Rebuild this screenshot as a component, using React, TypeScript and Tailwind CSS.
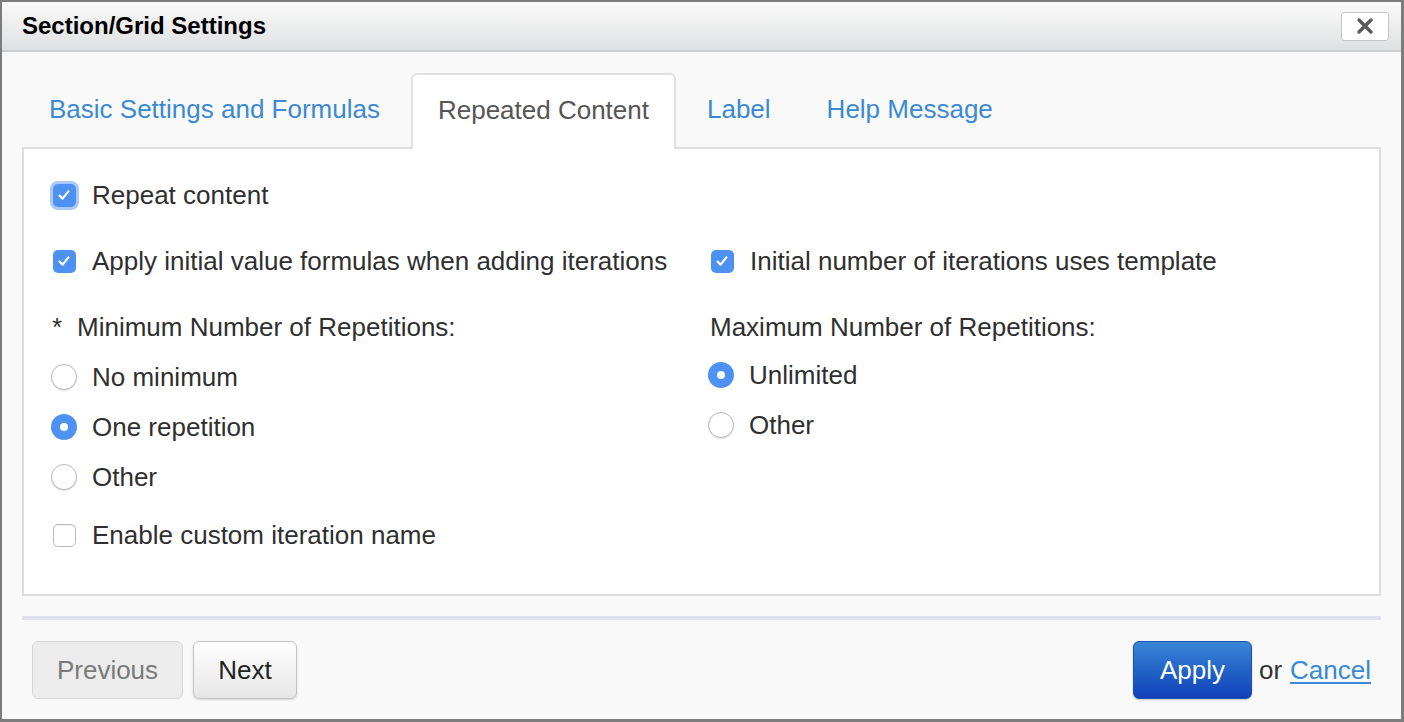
import type { ReactNode } from "react";

const FONT = "font-['Liberation_Sans',Arial,Helvetica,sans-serif]";

function Check({ checked, focus }: { checked: boolean; focus?: boolean }) {
  return (
    <span className="flex h-[26px] w-[26px] shrink-0 items-center justify-center">
      {checked ? (
        <span
          className={
            "flex h-[23px] w-[23px] items-center justify-center rounded-[5px] bg-[#4d92f2] " +
            (focus ? "shadow-[0_0_0_3px_#a9c9f9]" : "")
          }
        >
          <svg width="16" height="16" viewBox="0 0 16 16" fill="none">
            <path d="M3.6 8.6 6.6 11.6 12.4 4.4" stroke="white" strokeWidth="2.2" strokeLinecap="round" strokeLinejoin="round" />
          </svg>
        </span>
      ) : (
        <span className="h-[23px] w-[23px] rounded-[5px] border border-[#b9b9b9] bg-white shadow-[inset_0_1px_1px_rgba(0,0,0,0.04)]" />
      )}
    </span>
  );
}

function Radio({ checked }: { checked: boolean }) {
  return checked ? (
    <span className="flex h-[26px] w-[26px] shrink-0 items-center justify-center rounded-full bg-[#4d92f2]">
      <span className="h-[8px] w-[8px] rounded-full bg-white" />
    </span>
  ) : (
    <span className="h-[26px] w-[26px] shrink-0 rounded-full border border-[#b9b9b9] bg-white shadow-[0_1px_1px_rgba(0,0,0,0.12)]" />
  );
}

function Row({ control, children }: { control?: ReactNode; children: ReactNode }) {
  return (
    <div className="flex h-[40px] items-center gap-[15px] whitespace-nowrap">
      {control}
      <span>{children}</span>
    </div>
  );
}

const tabs = [
  { name: "Basic Settings and Formulas", active: false },
  { name: "Repeated Content", active: true },
  { name: "Label", active: false },
  { name: "Help Message", active: false },
];

export default function App() {
  return (
    <div
      className={`${FONT} flex h-[722px] w-[1404px] flex-col border-t-2 border-b-[3px] border-l-2 border-r-[3px] border-[#7c7c7c] bg-[#f9f9f9] text-[26px] text-[#2f2f2f]`}
    >
      {/* title bar */}
      <div className="flex h-[50px] shrink-0 items-center justify-between border-b-2 border-[#c9cacb] bg-gradient-to-b from-[#fafafa] to-[#dfe0e1] pl-[20px] pr-[12px]">
        <h1 className="text-[24px] font-bold text-black">Section/Grid Settings</h1>
        <button className="flex h-[29px] w-[48px] items-center justify-center rounded-[3px] border border-[#c6c6c6] bg-white">
          <svg width="18" height="18" viewBox="0 0 18 18">
            <path d="M3 3 15 15M15 3 3 15" stroke="#5a5a5a" strokeWidth="3.4" strokeLinecap="round" />
          </svg>
        </button>
      </div>

      <div className="flex flex-1 flex-col px-[20px]">
        {/* tabs */}
        <div className="mt-[21px] flex gap-[6px] pl-[2px]">
          {tabs.map((t) =>
            t.active ? (
              <div
                key={t.name}
                className="relative z-10 -mb-[2px] flex h-[76px] items-center rounded-t-[6px] border-2 border-b-0 border-[#e1e1e1] bg-white px-[25px] pb-[3px] text-[#555]"
              >
                {t.name}
              </div>
            ) : (
              <div key={t.name} className="flex h-[74px] items-center px-[25px] pb-[1px] text-[#3a89d2]">
                {t.name}
              </div>
            ),
          )}
        </div>

        {/* panel */}
        <div className="h-[449px] border-2 border-[#dedede] bg-white pl-[27px] pt-[26px]">
          <Row control={<Check checked focus />}>Repeat content</Row>
          <div className="mt-[26px] flex">
            <div className="flex w-[657px] flex-col">
              <Row control={<Check checked />}>Apply initial value formulas when adding iterations</Row>
              <div className="mt-[26px] flex h-[40px] items-center whitespace-nowrap pl-[1px]">
                <span className="w-[25px]">*</span>
                <span>Minimum Number of Repetitions:</span>
              </div>
              <div className="mt-[10px] flex flex-col gap-[10px]">
                <Row control={<Radio checked={false} />}>No minimum</Row>
                <Row control={<Radio checked />}>One repetition</Row>
                <Row control={<Radio checked={false} />}>Other</Row>
              </div>
              <div className="mt-[18px]">
                <Row control={<Check checked={false} />}>Enable custom iteration name</Row>
              </div>
            </div>
            <div className="flex flex-col">
              <div className="pl-[1px]">
                <Row control={<Check checked />}>Initial number of iterations uses template</Row>
              </div>
              <div className="mt-[26px] flex h-[40px] items-center whitespace-nowrap pl-[2px]">
                Maximum Number of Repetitions:
              </div>
              <div className="mt-[8px] flex flex-col gap-[10px]">
                <Row control={<Radio checked />}>Unlimited</Row>
                <Row control={<Radio checked={false} />}>Other</Row>
              </div>
            </div>
          </div>
        </div>

        {/* divider */}
        <div className="mt-[20px] h-[4px] bg-[#e0dfee]" />

        {/* footer */}
        <div className="mt-[21px] flex items-center justify-between pl-[10px] pr-[10px]">
          <div className="flex gap-[10px]">
            <button className="h-[58px] w-[151px] rounded-[6px] border border-[#d6d6d6] bg-[#ececec] text-[#7a7a7a]">
              Previous
            </button>
            <button className="h-[58px] w-[104px] rounded-[6px] border border-[#c4c4c4] bg-gradient-to-b from-white to-[#e5e5e5] text-[#222] shadow-[0_1px_2px_rgba(0,0,0,0.15)]">
              Next
            </button>
          </div>
          <div className="flex items-center">
            <button className="h-[58px] w-[119px] rounded-[6px] border border-[#1d4fae] bg-gradient-to-b from-[#3a85d6] to-[#1240b8] text-white shadow-[0_1px_2px_rgba(0,0,0,0.2)]">
              Apply
            </button>
            <span className="ml-[7px] text-[#333]">or</span>
            <a href="#" className="ml-[8px] text-[#3a89d2] underline underline-offset-[3px]">
              Cancel
            </a>
          </div>
        </div>
      </div>
    </div>
  );
}
